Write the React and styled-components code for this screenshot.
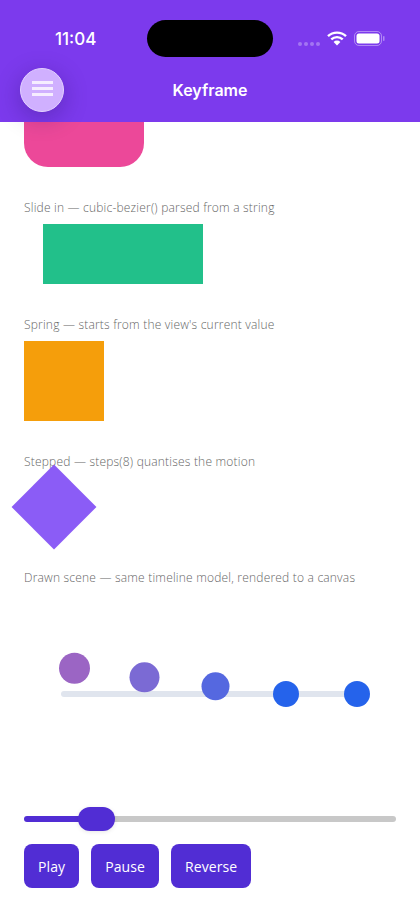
import styled, { createGlobalStyle } from 'styled-components';

const GlobalStyle = createGlobalStyle`
    html, body {
        margin: 0;
        padding: 0;
        background: #fff;
    }
    * {
        box-sizing: border-box;
    }
`;

const Screen = styled.div`
    position: relative;
    width: 420px;
    height: 912px;
    overflow: hidden;
    display: flex;
    flex-direction: column;
    background: #fff;
    font-family: "Open Sans", sans-serif;
`;

const Header = styled.header`
    flex: none;
    height: 122px;
    background: #7c3aed;
    color: #fff;
    display: flex;
    flex-direction: column;
`;

const StatusBar = styled.div`
    height: 68px;
    padding-top: 20px;
    display: grid;
    grid-template-columns: 1fr 126px 1fr;
    align-items: start;
`;

const Time = styled.span`
    padding-left: 55px;
    height: 37px;
    line-height: 39px;
    font-family: Inter, sans-serif;
    font-size: 17px;
    font-weight: 500;
    white-space: nowrap;
`;

const Island = styled.div`
    width: 126px;
    height: 37px;
    border-radius: 19px;
    background: #000;
`;

const StatusIcons = styled.div`
    display: flex;
    align-items: center;
    justify-content: flex-end;
    gap: 7px;
    height: 37px;
    padding-right: 35px;
`;

const SignalDots = styled.div`
    display: flex;
    gap: 2px;
    margin-top: 10px;
`;

const SignalDot = styled.i`
    width: 4px;
    height: 4px;
    border-radius: 50%;
    background: rgba(255, 255, 255, 0.3);
`;

const NavTitle = styled.h1`
    margin: 0;
    text-align: center;
    font-family: Inter, sans-serif;
    font-size: 16px;
    line-height: 44px;
    font-weight: 600;
`;

const MenuButton = styled.button`
    position: absolute;
    left: 20px;
    top: 68px;
    z-index: 2;
    width: 44px;
    height: 44px;
    padding: 0 0 3px;
    border: 1px solid #e4d2ff;
    border-radius: 50%;
    background: #d0b0ff;
    box-shadow: 0 6px 24px rgba(30, 10, 80, 0.3);
    display: flex;
    flex-direction: column;
    align-items: center;
    justify-content: center;
    gap: 3px;
`;

const MenuLine = styled.span`
    width: 21px;
    height: 3px;
    background: #f6edff;
`;

const Content = styled.main`
    flex: 1;
    min-height: 0;
    overflow: hidden;
    padding: 0 24px;
    display: flex;
    flex-direction: column;
`;

const Label = styled.p`
    margin: 33px 0 7px;
    font-size: 12px;
    font-weight: 300;
    line-height: 16.75px;
    letter-spacing: 0.2px;
    color: #666;
    white-space: nowrap;
`;

const Pink = styled.div`
    flex: none;
    width: 120px;
    height: 120px;
    margin-top: -75px;
    border-radius: 24px;
    background: #ec4899;
`;

const Green = styled.div`
    flex: none;
    width: 160px;
    height: 60px;
    margin-left: 19px;
    background: #22c08a;
`;

const Amber = styled.div`
    flex: none;
    width: 80px;
    height: 80px;
    background: #f59e0b;
`;

const Violet = styled.div`
    flex: none;
    width: 60px;
    height: 60px;
    transform: rotate(45deg);
    background: #8b5cf6;
`;

const SceneSvg = styled.svg`
    display: block;
    flex: none;
    width: 372px;
    height: 186px;
`;

const Slider = styled.div`
    flex: none;
    position: relative;
    height: 24px;
    margin-top: 27px;
    display: flex;
    align-items: center;
`;

const TrackFill = styled.div`
    height: 6px;
    width: 64px;
    border-radius: 3px 0 0 3px;
    background: #512dd4;
`;

const TrackRest = styled.div`
    flex: 1;
    height: 6px;
    border-radius: 0 3px 3px 0;
    background: #c8c8c8;
`;

const Thumb = styled.div`
    position: absolute;
    left: 54px;
    top: 0;
    width: 37px;
    height: 24px;
    border-radius: 12px;
    background: #512dd4;
    box-shadow: 0 1px 4px rgba(0, 0, 0, 0.1);
`;

const Controls = styled.div`
    flex: none;
    display: flex;
    gap: 12px;
    margin-top: 13px;
`;

const Button = styled.button`
    height: 44px;
    padding: 0 14px;
    border: none;
    border-radius: 8px;
    background: #512dd4;
    color: #fff;
    font-family: "Open Sans", sans-serif;
    font-size: 14px;
    font-weight: 400;
    letter-spacing: 0.1px;
`;

const scene = [
    { x: 50.5, y: 74.3, r: 15.5, color: '#9b65c4' },
    { x: 120.5, y: 83.3, r: 15, color: '#7b6ad4' },
    { x: 191.5, y: 92.3, r: 14, color: '#5568e0' },
    { x: 262, y: 100, r: 13, color: '#2563eb' },
    { x: 333, y: 100, r: 13, color: '#2563eb' },
];

function App() {
    return (
        <Screen>
            <GlobalStyle />
            <Header>
                <StatusBar>
                    <Time>11:04</Time>
                    <Island />
                    <StatusIcons>
                        <SignalDots>
                            <SignalDot />
                            <SignalDot />
                            <SignalDot />
                            <SignalDot />
                        </SignalDots>
                        <svg width="20" height="15" viewBox="0 0 20 15">
                            <path d="M1 5.2a13 13 0 0 1 18 0" fill="none" stroke="#fff" strokeWidth="2.4" />
                            <path d="M4.3 8.4a8.2 8.2 0 0 1 11.4 0" fill="none" stroke="#fff" strokeWidth="2.4" />
                            <path d="M6.6 11a4.8 4.8 0 0 1 6.8 0L10 14.6z" fill="#fff" />
                        </svg>
                        <svg width="31" height="15" viewBox="0 0 31 15">
                            <rect x="0.5" y="0.5" width="27" height="14" rx="4.5" fill="none" stroke="#fff" strokeOpacity="0.4" />
                            <rect x="2.5" y="2.5" width="23" height="10" rx="2.5" fill="#fff" />
                            <rect x="29" y="5" width="1.5" height="5" rx="0.75" fill="#fff" fillOpacity="0.4" />
                        </svg>
                    </StatusIcons>
                </StatusBar>
                <NavTitle>Keyframe</NavTitle>
            </Header>
            <MenuButton aria-label="Menu">
                <MenuLine />
                <MenuLine />
                <MenuLine />
            </MenuButton>
            <Content>
                <Pink />
                <Label>Slide in — cubic-bezier() parsed from a string</Label>
                <Green />
                <Label>Spring — starts from the view's current value</Label>
                <Amber />
                <Label>Stepped — steps(8) quantises the motion</Label>
                <Violet />
                <Label>Drawn scene — same timeline model, rendered to a canvas</Label>
                <SceneSvg viewBox="0 0 372 186">
                    <rect x="37" y="97" width="296" height="6" rx="3" fill="#e0e5ee" />
                    {scene.map((dot) => (
                        <circle key={dot.x} cx={dot.x} cy={dot.y} r={dot.r} fill={dot.color} />
                    ))}
                </SceneSvg>
                <Slider>
                    <TrackFill />
                    <TrackRest />
                    <Thumb />
                </Slider>
                <Controls>
                    <Button>Play</Button>
                    <Button>Pause</Button>
                    <Button>Reverse</Button>
                </Controls>
            </Content>
        </Screen>
    );
}

export default App;
